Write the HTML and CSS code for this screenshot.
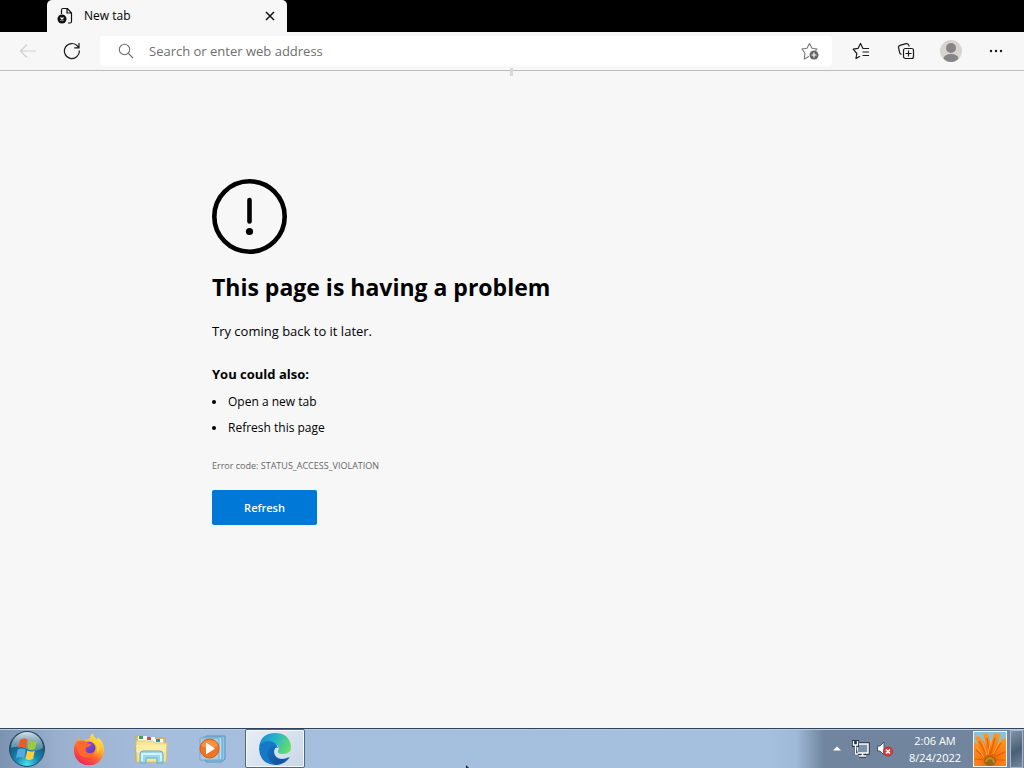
FILE: index.html
```html
<!DOCTYPE html>
<html lang="en">
<head>
  <meta charset="UTF-8">
  <meta name="viewport" content="width=device-width, initial-scale=1.0">
  <title>New tab</title>
  <link rel="stylesheet" href="styles.css">
</head>
<body>

  <header class="tab-strip">
    <div class="tab">
      <svg class="tab-icon" width="16" height="18" viewBox="0 0 16 18">
        <path d="M4.500 7V3q0-1.500 1.500-1.500h4.500L14.500 6v8.500q0 1.500-1.500 1.500h-2M10 1.500V6h4.500" fill="none" stroke="#111" stroke-width="1.200"/>
        <circle cx="5" cy="12" r="4.500" fill="#111"/>
        <path d="M3.500 10.500l3 3m0-3l-3 3" stroke="#fff" stroke-width="1.200"/>
      </svg>
      <span class="tab-title">New tab</span>
      <button class="tab-close" aria-label="Close tab">
        <svg width="10" height="10" viewBox="0 0 10 10"><path d="M1 1l8 8M9 1L1 9" stroke="#111" stroke-width="1.500"/></svg>
      </button>
    </div>
  </header>

  <nav class="toolbar">
    <button class="tool" aria-label="Back" disabled>
      <svg width="18" height="16" viewBox="0 0 18 16" fill="none" stroke="#d0d0d0" stroke-width="1.200"><path d="M17 8H1.500M8 1.500L1.500 8 8 14.500"/></svg>
    </button>
    <button class="tool" aria-label="Reload">
      <svg width="18" height="18" viewBox="0 0 18 18" fill="none" stroke="#1a1a1a" stroke-width="1.200"><path d="M16.400 8.500A7.500 7.500 0 1 1 14.500 4L16 5.600M16 1v4.800h-4.800"/></svg>
    </button>
    <div class="address-bar">
      <svg width="16" height="16" viewBox="0 0 16 16" fill="none" stroke="#6b6b6b" stroke-width="1.100"><circle cx="6.500" cy="6.500" r="5.200"/><path d="M10.300 10.300L15 15"/></svg>
      <input type="text" class="address" placeholder="Search or enter web address" aria-label="Address">
      <button class="add-favorite" aria-label="Add to favorites">
        <svg width="18" height="18" viewBox="0 0 18 18">
          <path d="M8 14.500l-4.800 2.500.8-5.700L1 7l5-.8L8.500 1.500 11 6.200l5 .8-1.500 1.700" fill="none" stroke="#777" stroke-width="1.100" stroke-linejoin="round"/>
          <circle cx="13" cy="13" r="4.500" fill="#666"/>
          <path d="M13 10.500v5M10.500 13h5" stroke="#fff" stroke-width="1.200"/>
        </svg>
      </button>
    </div>
    <div class="toolbar-actions">
      <button class="tool" aria-label="Favorites">
        <svg width="18" height="18" viewBox="0 0 18 18" fill="none" stroke="#1a1a1a" stroke-width="1.200" stroke-linejoin="round"><path d="M8 14.200L4 16.500l.8-5L1.200 7.200l4.800-.8L8.500 1.500l2.500 5H17M10.500 10H17M10.500 13.500H17"/></svg>
      </button>
      <button class="tool" aria-label="Collections">
        <svg width="18" height="18" viewBox="0 0 18 18" fill="none" stroke="#1a1a1a" stroke-width="1.200"><rect x="6.500" y="6.500" width="10" height="10" rx="2"/><path d="M11.500 8.500v6M8.500 11.500h6M4.500 12.500Q3 12 2.600 10.500L1.500 5.500Q1.300 3.800 3 3.300L9 1.700q1.800-.4 2.700 1.300l.5 1.500"/></svg>
      </button>
      <button class="tool" aria-label="Profile">
        <svg width="24" height="24" viewBox="0 0 24 24"><circle cx="12" cy="12" r="11" fill="#d5d4d1"/><circle cx="12" cy="9" r="5" fill="#858585"/><path d="M4.500 19.500Q5.500 15 12 15t7.500 4.500Q16.500 23 12 23t-7.500-3.500z" fill="#858585"/></svg>
      </button>
      <button class="tool" aria-label="Settings and more">
        <svg width="16" height="4" viewBox="0 0 16 4" fill="#1a1a1a"><circle cx="3" cy="2" r="1.200"/><circle cx="8" cy="2" r="1.200"/><circle cx="13" cy="2" r="1.200"/></svg>
      </button>
    </div>
    <span class="drag-handle"></span>
  </nav>

  <main class="error-page">
    <svg class="error-icon" width="75" height="75" viewBox="0 0 75 75">
      <circle cx="37.500" cy="37.500" r="35.200" fill="none" stroke="#000" stroke-width="4.600"/>
      <path d="M37.500 21v21.500" stroke="#000" stroke-width="4.600" stroke-linecap="round"/>
      <circle cx="37.500" cy="52.500" r="3.600"/>
    </svg>
    <h1>This page is having a problem</h1>
    <p class="lead">Try coming back to it later.</p>
    <h2>You could also:</h2>
    <ul class="suggestions">
      <li>Open a new tab</li>
      <li>Refresh this page</li>
    </ul>
    <p class="error-code">Error code: STATUS_ACCESS_VIOLATION</p>
    <button class="refresh">Refresh</button>
  </main>

  <footer class="taskbar">
    <button class="start" aria-label="Start">
      <svg width="38" height="38" viewBox="0 0 38 38">
        <defs>
          <radialGradient id="orb" cx=".5" cy=".95" r=".85"><stop offset="0" stop-color="#4fe0ef"/><stop offset=".4" stop-color="#1687b1"/><stop offset="1" stop-color="#174263"/></radialGradient>
          <linearGradient id="shine" x2="0" y2="1"><stop offset="0" stop-color="#e8f2f6" stop-opacity=".9"/><stop offset="1" stop-color="#a8c7d5" stop-opacity=".35"/></linearGradient>
        </defs>
        <circle cx="19" cy="19" r="17.500" fill="url(#orb)" stroke="#244a66"/>
        <path d="M3 18A16 16 0 0 1 35 18Q27 23 19 19T3 18z" fill="url(#shine)"/>
        <path d="M12 10q4-2.500 7.500-.5L18 18q-4-2-8 .3z" fill="#ed5927"/>
        <path d="M21 10.500q4 2 8 0L27 19q-4 2-7.500 0z" fill="#9bcb3c"/>
        <path d="M9.700 19.700q4-2.200 8 0L16 28q-4-2-8 .2z" fill="#57a9e0"/>
        <path d="M19.300 20.500q3.700 2 7.500.2L25 29q-4 2-7.500 0z" fill="#fdcf3c"/>
      </svg>
    </button>
    <button class="task" aria-label="Firefox">
      <svg width="32" height="32" viewBox="0 0 32 32">
        <defs>
          <linearGradient id="fox" x1=".8" y1="0" x2=".2" y2="1"><stop offset="0" stop-color="#fff15a"/><stop offset=".35" stop-color="#ffb52e"/><stop offset=".65" stop-color="#ff5a35"/><stop offset="1" stop-color="#e91c62"/></linearGradient>
          <linearGradient id="globe" x2="1" y2="1"><stop offset="0" stop-color="#a74ee0"/><stop offset="1" stop-color="#513bb4"/></linearGradient>
        </defs>
        <path d="M4 8q1-3 2-4 .2 3 2 4 3-2 6-1.500L17 5q0-3 3-4.500 0 4 4 6 1-1 .5-2.500 7 5 6.500 13A15 15 0 0 1 1 18Q.5 12 4 8z" fill="url(#fox)"/>
        <circle cx="16" cy="15" r="6.500" fill="url(#globe)"/>
        <path d="M4 9q4-2 8-1l3 2.500q3 0 3 1.500-2 2-5 2.500-1.500 3 1 5 4 2 7-1-1 6-7 6-9-1-10-10z" fill="#ff6a2c"/>
        <path d="M20 9q6 3 4 11 4-4 2-10L21 3q1 3-1 6z" fill="#ffd53c"/>
      </svg>
    </button>
    <button class="task" aria-label="Windows Explorer">
      <svg width="34" height="32" viewBox="0 0 34 32">
        <path d="M2 29V3h7l2 2h20l1 24z" fill="#e3c66b" stroke="#c9ab57"/>
        <path d="M4 3h9v5H4z" fill="#fff"/><path d="M5 3h4v3H5z" fill="#3ea554"/>
        <path d="M12 4h9v5h-9z" fill="#fff"/><path d="M13 4h4v3h-4z" fill="#d4502e"/>
        <path d="M21 6h8v4h-8z" fill="#fff"/><path d="M22 6h4v3h-4z" fill="#2f8fa9"/>
        <path d="M2 8h17l2 2h12l-1 19H3z" fill="#f8e596" stroke="#dbc77a"/>
        <path d="M2 12h30v7H2z" fill="#fff0ad" opacity=".6"/>
        <path d="M6 30v-9q0-3 3-3h17q3 0 3 3v9h-6v-5H12v5z" fill="#9bd8ef" stroke="#5fafcf"/>
        <path d="M8 28v-7h19v7" fill="none" stroke="#d5f2fb" stroke-width="2"/>
      </svg>
    </button>
    <button class="task" aria-label="Windows Media Player">
      <svg width="30" height="28" viewBox="0 0 30 28">
        <path d="M8 1h19v23l-4 3H8z" fill="#8fc6e6" stroke="#5a94bd"/>
        <path d="M5 2h19v23H5z" fill="#b5dcf1" stroke="#5fa3c9"/>
        <path d="M2 3h19v22H2z" fill="#aacce2" stroke="#72a9ca"/>
        <circle cx="11.500" cy="13.500" r="9.500" fill="#ef7520" stroke="#d95b18"/>
        <path d="M3 11a9 9 0 0 1 17 0q-8 4-17 0z" fill="#fba45f" opacity=".6"/>
        <path d="M8 7.500l9 6-9 6z" fill="#fff"/>
      </svg>
    </button>
    <button class="task current" aria-label="Microsoft Edge">
      <svg width="34" height="34" viewBox="0 0 34 34">
        <defs>
          <linearGradient id="edgeTop" y1=".2" x2="1" y2=".5"><stop offset="0" stop-color="#168bd3"/><stop offset=".5" stop-color="#27b6c8"/><stop offset="1" stop-color="#66dd67"/></linearGradient>
          <linearGradient id="edgeBottom" x2="1" y2="1"><stop offset="0" stop-color="#1372bf"/><stop offset="1" stop-color="#124b91"/></linearGradient>
        </defs>
        <path d="M1 15Q3 1 17 1t16 13q.5 8-8 8-6 0-5-3 2-3-1-6Q10 6 1 15z" fill="url(#edgeTop)"/>
        <path d="M1 17Q2 9 10 9q8 0 10 7-5-1-5 4 0 7 8 8 5 0 9-3-5 8-15 8Q2 32 1 17z" fill="#1679c8"/>
        <path d="M14 14q-6 4-4 11 2 6 8 8 8-1 13-8-3 2-7 2-7 0-8-7 0-3 2-5-2-1-4-1z" fill="url(#edgeBottom)"/>
      </svg>
    </button>

    <div class="tray">
      <button class="tray-button" aria-label="Show hidden icons">
        <svg width="8" height="5" viewBox="0 0 8 5"><path d="M0 4.500L4 .5l4 4z" fill="#fff"/></svg>
      </button>
      <button class="tray-button" aria-label="Network">
        <svg width="18" height="18" viewBox="0 0 18 18">
          <path d="M5 4h11v9H5zM7 16h7" fill="#7d91a6" stroke="#26374b" stroke-width="3.500"/>
          <path d="M5 4h11v9H5zM10.500 13v3M7 16h7" fill="#7d91a6" stroke="#fff" stroke-width="1.500"/>
          <path d="M1 1h5v5H1zM3.500 6v8H6" fill="#26374b" stroke="#26374b" stroke-width="2"/>
          <path d="M1.500 1v4h4V1M3.500 5v9H6" fill="none" stroke="#fff" stroke-width="1.300"/>
        </svg>
      </button>
      <button class="tray-button" aria-label="Volume muted">
        <svg width="18" height="16" viewBox="0 0 18 16">
          <path d="M1.500 5h2.500l4-4v13l-4-4H1.500z" fill="#fff" stroke="#40566f"/>
          <circle cx="12" cy="10.500" r="4.700" fill="#d93a35" stroke="#a92c2d" stroke-width=".6"/>
          <path d="M10 8.500l4 4m0-4l-4 4" stroke="#fff" stroke-width="1.600"/>
        </svg>
      </button>
      <div class="clock">
        <time>2:06 AM</time>
        <time>8/24/2022</time>
      </div>
      <button class="user-picture" aria-label="User account">
        <svg width="32" height="34" viewBox="0 0 32 34">
          <defs><radialGradient id="petals" cx=".5" cy=".8" r=".8"><stop offset="0" stop-color="#e95d09"/><stop offset=".4" stop-color="#f87911"/><stop offset="1" stop-color="#ff9a20"/></radialGradient></defs>
          <path d="M0 0h32v34H0z" fill="#90bfd0"/>
          <path d="M0 34V10l4 3L1 5l4-1 7 9L9 1l5 1 3 11L20 1l6 1-2 11 5-7 3 1v27z" fill="url(#petals)"/>
          <path d="M14 25L5 9m11 15L13 6m3 17l5-17M18 24l9-13M12 26L2 18m18 7l11-5M12 28L1 27m20 1l10 0" stroke="#e75c0a" stroke-width="1.200" fill="none"/>
          <path d="M13 23L9 11m5 11L17 8m2 14l6-11M10 25L2 14" stroke="#ffb13b" stroke-width="1" fill="none"/>
          <ellipse cx="16" cy="29" rx="6" ry="5" fill="#9b6512"/>
          <path d="M12 30q1-4 4-4 4 1 4 5" fill="none" stroke="#c68b22" stroke-width="2"/>
        </svg>
      </button>
      <button class="show-desktop" aria-label="Show desktop"></button>
    </div>
  </footer>

  <svg class="pointer" width="4" height="3" viewBox="0 0 4 3"><path d="M1 0l3 3H1z" fill="#1b2530"/></svg>

</body>
</html>
```

FILE: styles.css
```css
* {
  box-sizing: border-box;
}

body {
  margin: 0;
  height: 100vh;
  display: flex;
  flex-direction: column;
  overflow: hidden;
  background-color: #f7f7f7;
  color: #000;
  font-family: "Open Sans", "Noto Sans", sans-serif;
  font-size: 13px;
}

button {
  display: flex;
  align-items: center;
  justify-content: center;
  margin: 0;
  padding: 0;
  border: 0;
  background: none;
  font-family: inherit;
}

svg {
  display: block;
  flex-shrink: 0;
}

.tab-strip {
  display: flex;
  height: 32px;
  padding-left: 47px;
  background-color: #000;
}

.tab {
  display: flex;
  align-items: center;
  width: 240px;
  padding: 0 10px;
  border-radius: 5px 5px 0 0;
  background-color: #f7f7f7;
}

.tab-title {
  flex: 1;
  margin-left: 11px;
  font-size: 12px;
  line-height: 16px;
}

.tab-close {
  width: 14px;
  height: 16px;
}

.toolbar {
  position: relative;
  display: flex;
  align-items: center;
  height: 39px;
  padding: 0 6px;
  border-bottom: 1px solid #bcbcbc;
}

.tool {
  width: 44px;
  height: 30px;
}

.address-bar {
  flex: 1;
  display: flex;
  align-items: center;
  height: 30px;
  margin-left: 6px;
  padding: 0 13px 0 18px;
  border-radius: 3px;
  background-color: #fff;
}

.address {
  flex: 1;
  min-width: 0;
  margin-left: 15px;
  padding: 0;
  border: 0;
  outline: 0;
  background: none;
  font-family: inherit;
  font-size: 13px;
}

.address::placeholder {
  color: #6e6e6e;
  opacity: 1;
}

.toolbar-actions {
  display: flex;
  gap: 1px;
  margin-left: 7px;
}

/* small grip that hangs over the toolbar border */
.drag-handle {
  position: absolute;
  left: 50%;
  bottom: -6px;
  width: 3px;
  height: 8px;
  margin-left: -2px;
  background-color: #d8d8d8;
}

.error-page {
  flex: 1;
  min-height: 0;
  padding: 108px 24px 0 212px;
}

h1 {
  margin: 16px 0 0;
  font-size: 23px;
  line-height: 34px;
}

.lead {
  margin: 17px 0 0;
  line-height: 20px;
}

h2 {
  margin: 23px 0 0;
  font-size: 13px;
  line-height: 20px;
}

.suggestions {
  margin: 5px 0 0;
  padding: 0;
  list-style: none;
  font-size: 12px;
  line-height: 26px;
}

.suggestions li {
  display: flex;
  align-items: center;
}

.suggestions li::before {
  content: "";
  width: 4px;
  height: 4px;
  margin-right: 12px;
  border-radius: 50%;
  background-color: #000;
}

.error-code {
  margin: 17px 0 0;
  color: #666;
  font-size: 9px;
  line-height: 16px;
}

.refresh {
  width: 105px;
  height: 35px;
  margin-top: 16px;
  border-radius: 2px;
  background-color: #0078d7;
  color: #fff;
  font-size: 11px;
  font-weight: 600;
}

.taskbar {
  display: flex;
  gap: 2px;
  height: 40px;
  border-top: 1px solid #2d435e;
  background: linear-gradient(90deg, #7b92b1 0, #9bb0cf 60px, #a5bedd 160px, #a5bfdf 75%, #9fb9d8 calc(100% - 228px), #71869e calc(100% - 200px), #71869e 100%);
  box-shadow: inset 0 1px #bacce0;
}

.start {
  width: 54px;
  margin-right: 3px;
}

.task {
  width: 60px;
  border-radius: 2px;
}

.current {
  border: 1px solid #53677e;
  background: linear-gradient(135deg, #e8edf5, #c9d7e8);
  box-shadow: inset 0 0 0 1px #f6f9fc;
}

.tray {
  display: flex;
  align-items: center;
  margin-left: auto;
  padding-right: 1px;
}

.tray-button {
  width: 24px;
  height: 32px;
}

.clock {
  display: flex;
  flex-direction: column;
  align-items: center;
  width: 76px;
  color: #fff;
  font-size: 11px;
  line-height: 17px;
}

.user-picture {
  overflow: hidden;
  width: 34px;
  height: 36px;
  border: 1px solid #eef3f6;
}

.show-desktop {
  width: 13px;
  height: 38px;
  margin-left: 3px;
  border: 1px solid #a9b8c8;
  background: linear-gradient(150deg, #8293a7, #495f78 55%, #74889e);
}

/* mouse pointer at the bottom edge of the screen */
.pointer {
  position: absolute;
  left: 465px;
  bottom: 0;
}
```
